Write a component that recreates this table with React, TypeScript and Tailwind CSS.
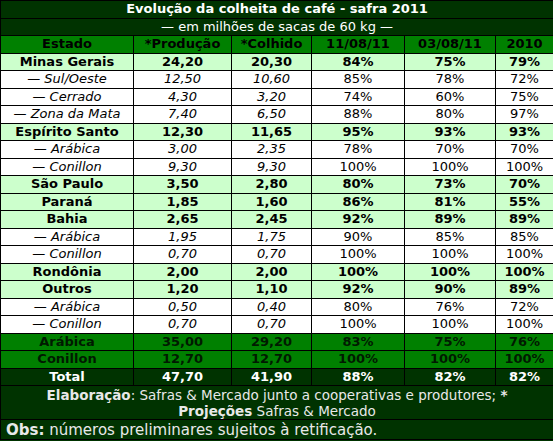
import React from 'react';

type Kind = 'state' | 'sub' | 'kind' | 'total';

interface Row {
  name: string;
  kind: Kind;
  prod: string;
  colh: string;
  a: string;
  b: string;
  c: string;
}

const rows: Row[] = [
  { name: 'Minas Gerais', kind: 'state', prod: '24,20', colh: '20,30', a: '84%', b: '75%', c: '79%' },
  { name: '— Sul/Oeste', kind: 'sub', prod: '12,50', colh: '10,60', a: '85%', b: '78%', c: '72%' },
  { name: '— Cerrado', kind: 'sub', prod: '4,30', colh: '3,20', a: '74%', b: '60%', c: '75%' },
  { name: '— Zona da Mata', kind: 'sub', prod: '7,40', colh: '6,50', a: '88%', b: '80%', c: '97%' },
  { name: 'Espírito Santo', kind: 'state', prod: '12,30', colh: '11,65', a: '95%', b: '93%', c: '93%' },
  { name: '— Arábica', kind: 'sub', prod: '3,00', colh: '2,35', a: '78%', b: '70%', c: '70%' },
  { name: '— Conillon', kind: 'sub', prod: '9,30', colh: '9,30', a: '100%', b: '100%', c: '100%' },
  { name: 'São Paulo', kind: 'state', prod: '3,50', colh: '2,80', a: '80%', b: '73%', c: '70%' },
  { name: 'Paraná', kind: 'state', prod: '1,85', colh: '1,60', a: '86%', b: '81%', c: '55%' },
  { name: 'Bahia', kind: 'state', prod: '2,65', colh: '2,45', a: '92%', b: '89%', c: '89%' },
  { name: '— Arábica', kind: 'sub', prod: '1,95', colh: '1,75', a: '90%', b: '85%', c: '85%' },
  { name: '— Conillon', kind: 'sub', prod: '0,70', colh: '0,70', a: '100%', b: '100%', c: '100%' },
  { name: 'Rondônia', kind: 'state', prod: '2,00', colh: '2,00', a: '100%', b: '100%', c: '100%' },
  { name: 'Outros', kind: 'state', prod: '1,20', colh: '1,10', a: '92%', b: '90%', c: '89%' },
  { name: '— Arábica', kind: 'sub', prod: '0,50', colh: '0,40', a: '80%', b: '76%', c: '72%' },
  { name: '— Conillon', kind: 'sub', prod: '0,70', colh: '0,70', a: '100%', b: '100%', c: '100%' },
  { name: 'Arábica', kind: 'kind', prod: '35,00', colh: '29,20', a: '83%', b: '75%', c: '76%' },
  { name: 'Conillon', kind: 'kind', prod: '12,70', colh: '12,70', a: '100%', b: '100%', c: '100%' },
  { name: 'Total', kind: 'total', prod: '47,70', colh: '41,90', a: '88%', b: '82%', c: '82%' },
];

const rowStyle: Record<Kind, string> = {
  state: 'bg-[#ccffcc] text-black font-bold',
  sub: 'bg-white text-black',
  kind: 'bg-[#008000] text-[#001a00] font-bold',
  total: 'bg-[#003300] text-white font-bold',
};

const headers = ['Estado', '*Produção', '*Colhido', '11/08/11', '03/08/11', '2010'];

export default function App() {
  return (
    <div className="w-[553px] h-[441px] bg-[#003300] font-['DejaVu_Sans',sans-serif] text-[13px] leading-[16px]">
      <table className="w-[553px] table-fixed border-collapse border border-black text-center">
        <colgroup>
          <col className="w-[133px]" />
          <col className="w-[98px]" />
          <col className="w-[80px]" />
          <col className="w-[93px]" />
          <col className="w-[91px]" />
          <col className="w-[58px]" />
        </colgroup>
        <tbody>
          <tr className="h-[17.5px] bg-[#003300] text-white font-bold">
            <td colSpan={6} className="border border-black p-0">Evolução da colheita de café - safra 2011</td>
          </tr>
          <tr className="h-[17.5px] bg-[#003300] text-white">
            <td colSpan={6} className="border border-black p-0">— em milhões de sacas de 60 kg —</td>
          </tr>
          <tr className="h-[17.5px] bg-[#008000] text-black font-bold">
            {headers.map((h) => (
              <td key={h} className="border border-black p-0">{h}</td>
            ))}
          </tr>
          {rows.map((r, i) => {
            const it = r.kind === 'sub' ? 'italic' : '';
            return (
              <tr key={i} className={`h-[17.5px] ${rowStyle[r.kind]}`}>
                <td className={`border border-black p-0 ${it}`}>{r.name}</td>
                <td className={`border border-black p-0 ${it}`}>{r.prod}</td>
                <td className={`border border-black p-0 ${it}`}>{r.colh}</td>
                <td className="border border-black p-0">{r.a}</td>
                <td className="border border-black p-0">{r.b}</td>
                <td className="border border-black p-0">{r.c}</td>
              </tr>
            );
          })}
          <tr className="h-[34px] bg-[#003300] text-[#e8e8e8]">
            <td colSpan={6} className="border border-black p-0 text-[13.5px] leading-[16px]">
              <b>Elaboração</b>: Safras &amp; Mercado junto a cooperativas e produtores; <b>*</b>
              <br />
              <b>Projeções</b> Safras &amp; Mercado
            </td>
          </tr>
          <tr className="h-[20px] bg-[#003300] text-[#e8e8e8]">
            <td colSpan={6} className="border border-black p-0 pl-[5px] text-left text-[15px] leading-[18px]">
              <b>Obs:</b> números preliminares sujeitos à retificação.
            </td>
          </tr>
        </tbody>
      </table>
    </div>
  );
}
